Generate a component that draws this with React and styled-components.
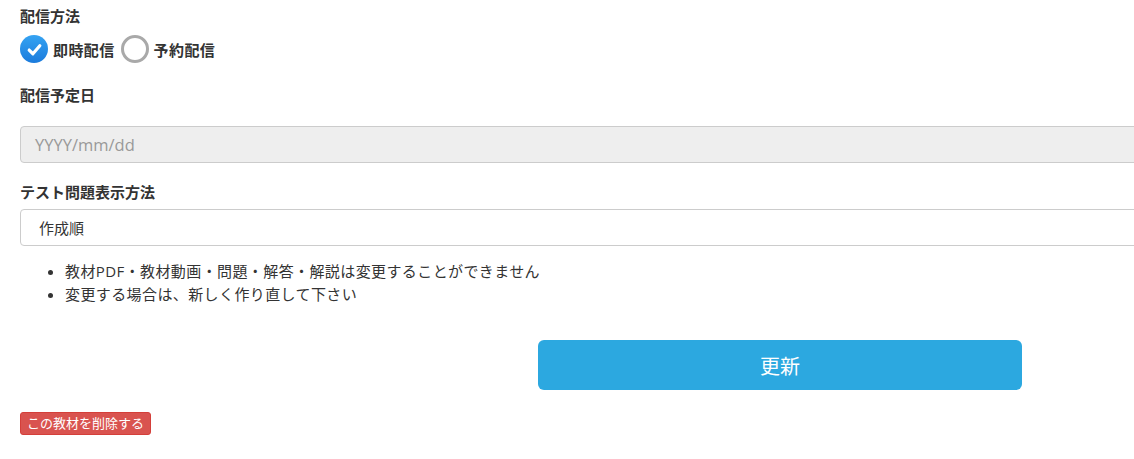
import React from 'react';
import styled, { createGlobalStyle } from 'styled-components';

const GlobalStyle = createGlobalStyle`
  html, body {
    margin: 0;
    padding: 0;
    background: #fff;
    overflow: hidden;
  }
  body {
    font-family: "Open Sans", "Noto Sans CJK JP", sans-serif;
    color: #333;
  }
`

const Container = styled.div`
  width: 1520px;
  padding: 6px 20px 20px 20px;
  display: flex;
  flex-direction: column;
`

const Label = styled.div`
  font-size: 15px;
  font-weight: bold;
  line-height: 20px;
  color: #333;
  margin-bottom: ${p => p.$mb || 5}px;
`

const RadioRow = styled.div`
  display: flex;
  align-items: center;
  gap: 6px;
  margin-bottom: 22px;
`

const RadioItem = styled.label`
  display: flex;
  align-items: center;
  gap: 5px;
  font-size: 15px;
  font-weight: bold;
  letter-spacing: 0.4px;
  color: #333;
`

const Circle = styled.span`
  width: 28px;
  height: 28px;
  border-radius: 50%;
  box-sizing: border-box;
  display: flex;
  align-items: center;
  justify-content: center;
  background: ${p => (p.$checked ? 'linear-gradient(#35a3f2, #1b7bdc)' : '#fff')};
  border: ${p => (p.$checked ? 'none' : '3px solid #a9a9a9')};
`

const Field = styled.div`
  height: 37px;
  box-sizing: border-box;
  border: 1px solid #ccc;
  border-radius: 4px;
  background: ${p => (p.$disabled ? '#eee' : '#fff')};
  color: ${p => (p.$disabled ? '#999' : '#333')};
  font-size: ${p => (p.$disabled ? 16.5 : 15)}px;
  padding-left: ${p => (p.$disabled ? 14 : 18)}px;
  display: flex;
  align-items: center;
  margin-bottom: ${p => p.$mb || 0}px;
`

const Notes = styled.ul`
  margin: 14px 0 0 0;
  padding-left: 45px;
  font-size: 15px;
  letter-spacing: 0.4px;
  line-height: 23px;
  color: #333;
`

const ButtonRow = styled.div`
  display: flex;
  justify-content: center;
  margin-top: 34px;
`

const UpdateButton = styled.button`
  width: 484px;
  height: 50px;
  border: none;
  border-radius: 6px;
  background: #2ca8e0;
  color: #fff;
  font-family: inherit;
  font-size: 20px;
`

const DeleteButton = styled.button`
  align-self: flex-start;
  margin-top: 22px;
  height: 23px;
  padding: 0 6px;
  border: 1px solid #d43f3a;
  border-radius: 3px;
  background: #d9534f;
  color: #fff;
  font-family: inherit;
  font-size: 13px;
  line-height: 21px;
`

const Check = () => (
  <svg width="17" height="17" viewBox="0 0 16 16">
    <path d="M3 8.5 L6.5 12 L13 4.5" fill="none" stroke="#fff" strokeWidth="3" strokeLinecap="round" strokeLinejoin="round" />
  </svg>
)

function App() {
  return (
    <Container>
      <GlobalStyle />
      <Label $mb={9}>配信方法</Label>
      <RadioRow>
        <RadioItem>
          <Circle $checked><Check /></Circle>
          即時配信
        </RadioItem>
        <RadioItem>
          <Circle />
          予約配信
        </RadioItem>
      </RadioRow>
      <Label $mb={21}>配信予定日</Label>
      <Field $disabled $mb={19}>YYYY/mm/dd</Field>
      <Label $mb={7}>テスト問題表示方法</Label>
      <Field>作成順</Field>
      <Notes>
        <li>教材PDF・教材動画・問題・解答・解説は変更することができません</li>
        <li>変更する場合は、新しく作り直して下さい</li>
      </Notes>
      <ButtonRow>
        <UpdateButton>更新</UpdateButton>
      </ButtonRow>
      <DeleteButton>この教材を削除する</DeleteButton>
    </Container>
  );
}

export default App;
